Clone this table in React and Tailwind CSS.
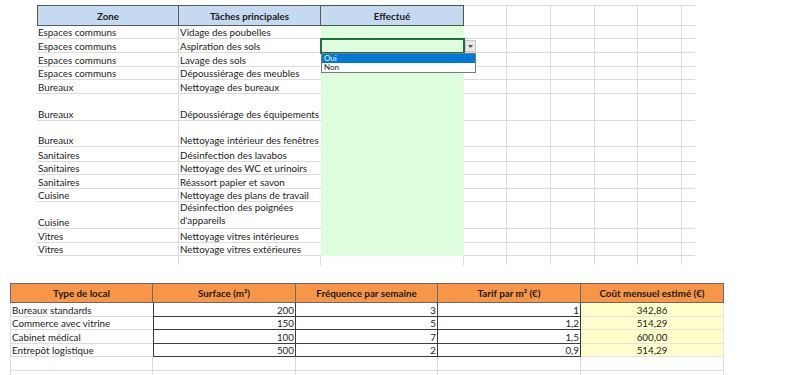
import React from 'react';

const tasks = [
  { zone: 'Espaces communs', task: 'Vidage des poubelles', h: 'h-[13px]' },
  { zone: 'Espaces communs', task: 'Aspiration des sols', h: 'h-[14px]', selected: true },
  { zone: 'Espaces communs', task: 'Lavage des sols', h: 'h-[14px]' },
  { zone: 'Espaces communs', task: 'Dépoussiérage des meubles', h: 'h-[13px]' },
  { zone: 'Bureaux', task: 'Nettoyage des bureaux', h: 'h-[14px]' },
  { zone: 'Bureaux', task: 'Dépoussiérage des équipements', h: 'h-[27px]' },
  { zone: 'Bureaux', task: 'Nettoyage intérieur des fenêtres', h: 'h-[26px]' },
  { zone: 'Sanitaires', task: 'Désinfection des lavabos', h: 'h-[15px]' },
  { zone: 'Sanitaires', task: 'Nettoyage des WC et urinoirs', h: 'h-[13px]' },
  { zone: 'Sanitaires', task: 'Réassort papier et savon', h: 'h-[14px]' },
  { zone: 'Cuisine', task: 'Nettoyage des plans de travail', h: 'h-[13px]' },
  { zone: 'Cuisine', task: 'Désinfection des poignées d\'appareils', h: 'h-[27px]', wrap: true },
  { zone: 'Vitres', task: 'Nettoyage vitres intérieures', h: 'h-[14px]' },
  { zone: 'Vitres', task: 'Nettoyage vitres extérieures', h: 'h-[13px]' },
];

const locaux = [
  { type: 'Bureaux standards', surface: '200', freq: '3', tarif: '1', cout: '342,86', h: 'h-[14px]' },
  { type: 'Commerce avec vitrine', surface: '150', freq: '5', tarif: '1,2', cout: '514,29', h: 'h-[13px]' },
  { type: 'Cabinet médical', surface: '100', freq: '7', tarif: '1,5', cout: '600,00', h: 'h-[14px]' },
  { type: 'Entrepôt logistique', surface: '500', freq: '2', tarif: '0,9', cout: '514,29', h: 'h-[13px]' },
];

function Grid() {
  // empty columns to the right of the task table
  return (
    <>
      <div className="w-[43px] shrink-0 border-r border-b border-[#dcdcdc]" />
      <div className="w-[44px] shrink-0 border-r border-b border-[#dcdcdc]" />
      <div className="w-[44px] shrink-0 border-r border-b border-[#dcdcdc]" />
      <div className="w-[43px] shrink-0 border-r border-b border-[#dcdcdc]" />
      <div className="w-[44px] shrink-0 border-r border-b border-[#dcdcdc]" />
      <div className="w-[13px] shrink-0 border-b border-[#dcdcdc]" />
    </>
  );
}

export default function App() {
  return (
    <div className="w-[800px] h-[375px] overflow-hidden bg-white text-[9.8px] leading-[12px] text-[#1c1c1c]" style={{ fontFamily: 'Lato, "Open Sans", sans-serif' }}>
      <div className="ml-[37px] pt-[5px]">
        <div className="flex h-[21px]">
          <div className="w-[142px] shrink-0 flex items-center justify-center font-bold bg-[#c5d9f1] border border-[#5a5a5a]">Zone</div>
          <div className="w-[142px] shrink-0 flex items-center justify-center font-bold bg-[#c5d9f1] border-y border-r border-[#5a5a5a]">Tâches principales</div>
          <div className="w-[143px] shrink-0 flex items-center justify-center font-bold bg-[#c5d9f1] border-y border-r border-[#44584c]">Effectué</div>
          <div className="flex border-t border-[#dcdcdc]">
            <Grid />
          </div>
        </div>

        {tasks.map((t, i) => (
          <div key={i} className={`flex ${t.h}`}>
            <div className="w-[142px] shrink-0 flex items-end px-[1px] border-r border-b border-[#dcdcdc] whitespace-nowrap">{t.zone}</div>
            <div className="w-[142px] shrink-0 flex items-end px-[1px] border-b border-[#dcdcdc] whitespace-nowrap">
              {t.wrap ? (
                <span className="whitespace-normal leading-[13px] pb-[1px]">Désinfection des poignées<br />d'appareils</span>
              ) : t.task}
            </div>
            <div className="w-[143px] shrink-0 relative bg-[#ddfddd]">
              {t.selected && (
                <>
                  <div className="absolute inset-[-1px] border-2 border-[#1f6f43]" />
                  <div className="absolute left-[144px] top-[1px] w-[11px] h-[12px] bg-[#e8e8e8] border border-[#c8c8c8] flex items-center justify-center">
                    <svg width="5" height="3" viewBox="0 0 5 3"><path d="M0 0h5L2.5 3z" fill="#555" /></svg>
                  </div>
                  <div className="absolute left-0 top-[14px] w-[155px] z-10 bg-white border border-[#7a7a7a] text-[8px] leading-[9px]">
                    <div className="bg-[#0078d7] text-white px-[2px] h-[9px]">Oui</div>
                    <div className="px-[2px] h-[9px] text-[#222]">Non</div>
                  </div>
                </>
              )}
            </div>
            <div className="flex">
              <Grid />
            </div>
          </div>
        ))}

        <div className="flex h-[9px]">
          <div className="w-[142px] shrink-0 border-r border-[#dcdcdc]" />
          <div className="w-[142px] shrink-0 border-r border-[#dcdcdc]" />
          <div className="w-[143px] shrink-0 border-r border-[#dcdcdc]" />
          <div className="w-[43px] shrink-0 border-r border-[#dcdcdc]" />
          <div className="w-[44px] shrink-0 border-r border-[#dcdcdc]" />
          <div className="w-[44px] shrink-0 border-r border-[#dcdcdc]" />
          <div className="w-[43px] shrink-0 border-r border-[#dcdcdc]" />
          <div className="w-[44px] shrink-0 border-r border-[#dcdcdc]" />
        </div>
      </div>

      <div className="ml-[10px] mt-[18px]">
        <div className="flex h-[20px] font-bold text-[#1a1a1a]">
          <div className="w-[143px] shrink-0 flex items-center justify-center bg-[#f79646] border-y border-l border-r border-[#6a6a6a]">Type de local</div>
          <div className="w-[143px] shrink-0 flex items-center justify-center bg-[#f79646] border-y border-r border-[#6a6a6a]">Surface (m²)</div>
          <div className="w-[142px] shrink-0 flex items-center justify-center bg-[#f79646] border-y border-r border-[#6a6a6a]">Fréquence par semaine</div>
          <div className="w-[143px] shrink-0 flex items-center justify-center bg-[#f79646] border-y border-r border-[#6a6a6a]">Tarif par m² (€)</div>
          <div className="w-[143px] shrink-0 flex items-center justify-center bg-[#f79646] border-y border-r border-[#6a6a6a]">Coût mensuel estimé (€)</div>
        </div>
        {locaux.map((l, i) => (
          <div key={i} className={`flex ${l.h}`}>
            <div className="w-[143px] shrink-0 flex items-end px-[1px] border-l border-b border-[#dcdcdc] whitespace-nowrap">{l.type}</div>
            <div className="w-[143px] shrink-0 flex items-end justify-end px-[1px] border-l border-r border-b border-[#3c3c3c]">{l.surface}</div>
            <div className="w-[142px] shrink-0 flex items-end justify-end px-[1px] border-r border-b border-[#3c3c3c]">{l.freq}</div>
            <div className="w-[143px] shrink-0 flex items-end justify-end px-[1px] border-r border-b border-[#3c3c3c]">{l.tarif}</div>
            <div className="w-[143px] shrink-0 flex items-end justify-center bg-[#ffffcc] border-r border-b border-[#e4e4e4]">{l.cout}</div>
          </div>
        ))}
        <div className="flex h-[14px]">
          <div className="w-[143px] shrink-0 border-l border-r border-b border-[#dcdcdc]" />
          <div className="w-[143px] shrink-0 border-r border-b border-[#dcdcdc]" />
          <div className="w-[142px] shrink-0 border-r border-b border-[#dcdcdc]" />
          <div className="w-[143px] shrink-0 border-r border-b border-[#dcdcdc]" />
          <div className="w-[143px] shrink-0 border-r border-b border-[#dcdcdc]" />
        </div>
        <div className="flex h-[10px]">
          <div className="w-[143px] shrink-0 border-l border-r border-[#dcdcdc]" />
          <div className="w-[143px] shrink-0 border-r border-[#dcdcdc]" />
          <div className="w-[142px] shrink-0 border-r border-[#dcdcdc]" />
          <div className="w-[143px] shrink-0 border-r border-[#dcdcdc]" />
          <div className="w-[143px] shrink-0 border-r border-[#dcdcdc]" />
        </div>
      </div>
    </div>
  );
}
